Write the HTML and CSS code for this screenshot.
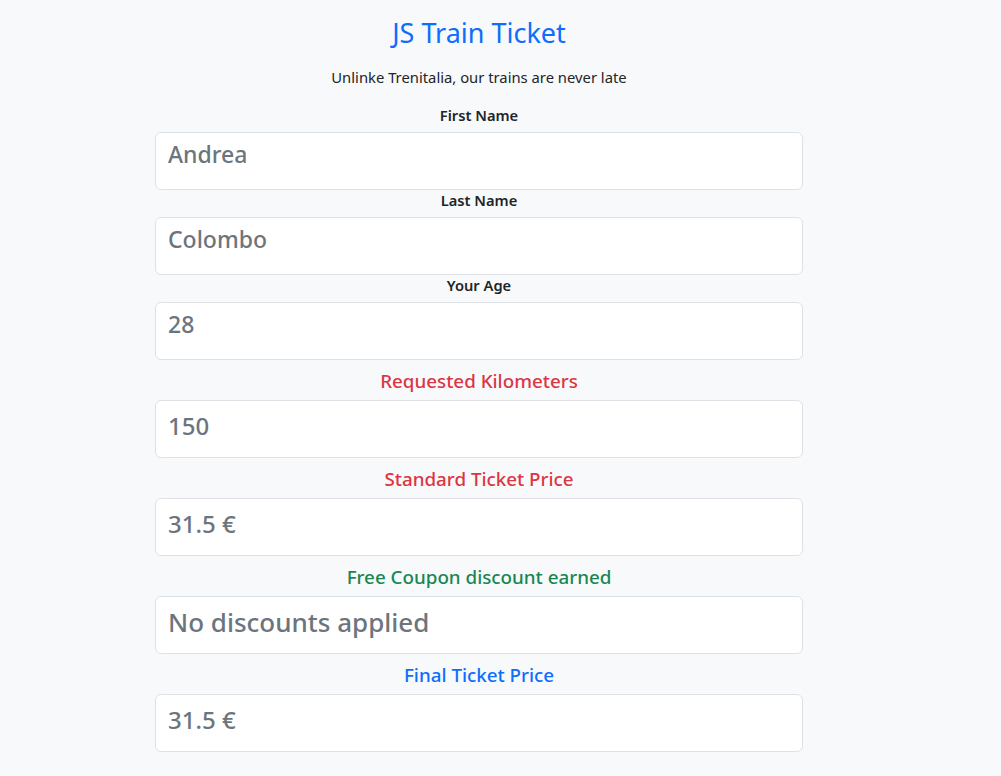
FILE: index.html
```html
<!DOCTYPE html>
<html lang="en">
<head>
<meta charset="utf-8">
<title>JS Train Ticket</title>
<link rel="stylesheet" href="styles.css">
</head>
<body>
<main class="page">
  <h1 class="title">JS Train Ticket</h1>
  <p class="subtitle">Unlinke Trenitalia, our trains are never late</p>
  <form class="form">
    <div class="group first">
      <label class="lbl">First Name</label>
      <div class="box sm">Andrea</div>
    </div>
    <div class="group">
      <label class="lbl">Last Name</label>
      <div class="box sm">Colombo</div>
    </div>
    <div class="group">
      <label class="lbl">Your Age</label>
      <div class="box sm">28</div>
    </div>
    <div class="group">
      <label class="lbl big red">Requested Kilometers</label>
      <div class="box md">150</div>
    </div>
    <div class="group">
      <label class="lbl big red">Standard Ticket Price</label>
      <div class="box md">31.5 €</div>
    </div>
    <div class="group">
      <label class="lbl big green">Free Coupon discount earned</label>
      <div class="box lg">No discounts applied</div>
    </div>
    <div class="group">
      <label class="lbl big blue">Final Ticket Price</label>
      <div class="box md">31.5 €</div>
    </div>
  </form>
</main>
</body>
</html>
```
FILE: styles.css
```css
body {
  margin: 0;
  background: #f8f9fa;
  font-family: "Noto Sans", "Open Sans", sans-serif;
  color: #212529;
}
.page {
  width: 958px;
  text-align: center;
}
.title {
  margin: 0;
  padding-top: 14px;
  font-size: 27px;
  font-weight: 400;
  line-height: 38px;
  color: #0d6efd;
}
.subtitle {
  margin: 14px 0 0;
  font-size: 14.8px;
  line-height: 22px;
}
.form {
  width: 648px;
  margin: 0 auto;
  display: flex;
  flex-direction: column;
}
.group {
  display: flex;
  flex-direction: column;
}
.group.first {
  margin-top: 17px;
}
.lbl {
  display: block;
  font-size: 14.7px;
  font-weight: 600;
  line-height: 20px;
  margin-bottom: 7px;
}
.lbl.big {
  font-size: 18.8px;
  font-weight: 500;
  line-height: 24px;
  margin-top: 9px;
}
.red { color: #dc3545; }
.green { color: #198754; }
.blue { color: #0d6efd; }
.box {
  box-sizing: border-box;
  height: 58px;
  border: 1px solid #dee2e6;
  border-radius: 6px;
  background: #fff;
  text-align: left;
  padding: 0 12px;
  color: #6c757d;
  font-weight: 500;
}
.box.sm {
  font-size: 23px;
  line-height: 43px;
}
.box.md {
  font-size: 24px;
  line-height: 50px;
}
.box.lg {
  font-size: 26px;
  line-height: 50px;
}
```
